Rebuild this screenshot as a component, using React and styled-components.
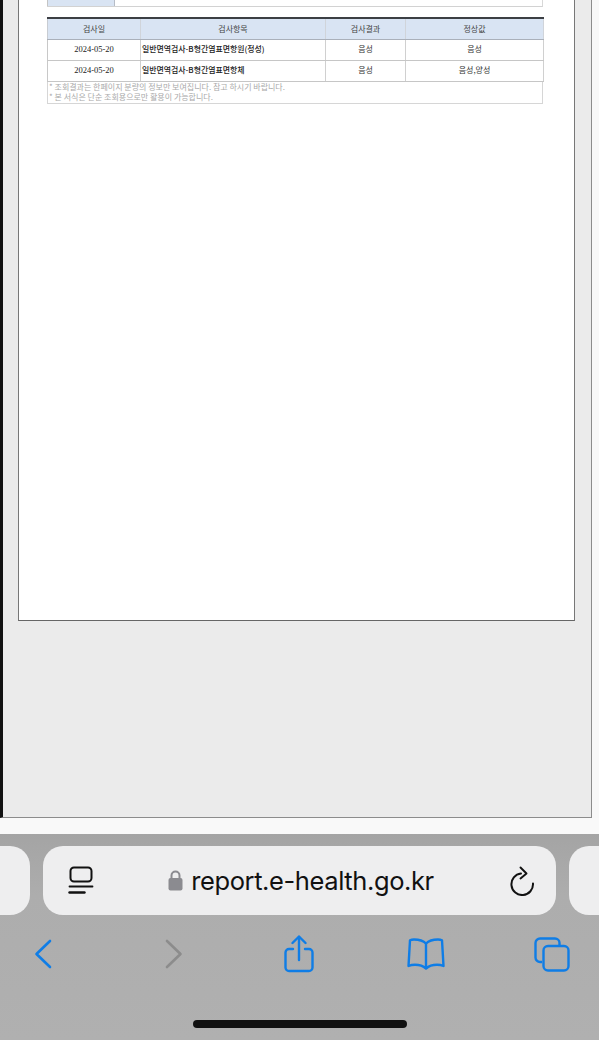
import React from "react";
import styled, { createGlobalStyle } from "styled-components";

const GlobalStyle = createGlobalStyle`
  html, body {
    margin: 0;
    padding: 0;
    background: #f8f8f8;
    overflow: hidden;
  }
`;

const Screen = styled.div`
  width: 599px;
  height: 1040px;
  display: flex;
  flex-direction: column;
  font-family: "Noto Sans CJK KR", "Liberation Sans", sans-serif;
`;

const Viewer = styled.div`
  box-sizing: border-box;
  width: 592px;
  height: 818px;
  flex: none;
  background: #ebebeb;
  border-left: 3px solid #111;
  border-right: 1px solid #8c8c8c;
  border-bottom: 1px solid #8c8c8c;
  padding-left: 15px;
`;

const Sheet = styled.div`
  box-sizing: border-box;
  width: 557px;
  height: 621px;
  background: #fff;
  border-left: 1px solid #777;
  border-right: 1px solid #777;
  border-bottom: 1px solid #666;
  padding-left: 28px;
`;

const PrevBlock = styled.div`
  width: 496px;
  height: 7px;
  border-bottom: 1px solid #d2d2d2;
  border-right: 1px solid #d8d8d8;
  box-sizing: border-box;
`;

const PrevLabel = styled.div`
  width: 68px;
  height: 6px;
  background: #d9e4f3;
  border-left: 1px solid #c4c4c4;
  border-right: 1px solid #b6bcc6;
  box-sizing: border-box;
`;

const ResultTable = styled.table`
  width: 496px;
  margin-top: 10px;
  border-collapse: collapse;
  table-layout: fixed;
  border-top: 2px solid #3c3f44;
  font-size: 8px;
  color: #333;
`;

const Column = styled.col`
  width: ${(p) => p.$w}px;
`;

const HeadCell = styled.th`
  height: 21px;
  padding: 0 0 1px;
  box-sizing: border-box;
  background: #d9e4f3;
  font-weight: 400;
  font-size: 8px;
  color: #444;
  border-bottom: 1px solid #aab0ba;
  border-left: 1px solid ${(p) => (p.$first ? "#c8ccd2" : "#8f98a6")};
  border-right: 1px solid #d0d4da;
`;

const Cell = styled.td`
  height: 21px;
  box-sizing: border-box;
  padding: 0 0 2px ${(p) => (p.$left ? "1px" : "0")};
  text-align: ${(p) => (p.$left ? "left" : "center")};
  border-bottom: 1px solid #c6c6c6;
  border-left: 1px solid ${(p) => (p.$first ? "#c8c8c8" : "#8f98a6")};
  border-right: 1px solid #d0d0d0;
  font-family: ${(p) =>
    p.$date ? '"Liberation Serif", serif' : '"Noto Sans CJK KR", sans-serif'};
  font-size: ${(p) => (p.$date ? "8.5px" : p.$strong ? "7.9px" : "8px")};
  font-weight: ${(p) => (p.$strong ? 500 : 400)};
  color: ${(p) => (p.$strong || p.$date ? "#222" : "#333")};
`;

const Notes = styled.div`
  box-sizing: border-box;
  width: 496px;
  height: 22px;
  padding: 0 0 0 1px;
  border-left: 1px solid #d6d6d6;
  border-right: 1px solid #d6d6d6;
  border-bottom: 1px solid #d6d6d6;
  color: #a9a9a9;
  font-size: 8px;
  line-height: 10.5px;
  white-space: nowrap;
`;

const WhiteStrip = styled.div`
  height: 16px;
  flex: none;
  background: #f9f9f9;
`;

const Chrome = styled.div`
  flex: 1;
  display: flex;
  flex-direction: column;
  background: linear-gradient(#a4a4a4, #adadad 30%, #b0b0b0);
  padding-top: 12px;
`;

const TabRow = styled.div`
  display: flex;
  height: 69px;
  gap: 13px;
  flex: none;
`;

const SidePill = styled.div`
  background: #eeeeef;
  width: ${(p) => p.$w}px;
  flex: none;
  border-radius: ${(p) => (p.$right ? "20px 0 0 20px" : "0 20px 20px 0")};
`;

const AddressBar = styled.div`
  box-sizing: border-box;
  width: 513px;
  flex: none;
  background: #eeeeef;
  border-radius: 20px;
  display: flex;
  align-items: center;
  justify-content: space-between;
  padding: 0 21px 0 25px;
`;

const UrlGroup = styled.div`
  display: flex;
  align-items: center;
  gap: 8px;
  margin-right: 2px;
`;

const UrlText = styled.span`
  font-family: Inter, "Liberation Sans", sans-serif;
  font-size: 25.5px;
  letter-spacing: -0.4px;
  line-height: 36px;
  color: #111;
  white-space: nowrap;
`;

const Toolbar = styled.div`
  display: grid;
  grid-template-columns: 86px 176px 74px 180px 72px;
  justify-items: center;
  align-items: center;
  height: 78px;
  flex: none;
`;

const HomeBar = styled.div`
  width: 214px;
  height: 8px;
  margin: 27px auto 0;
  border-radius: 4px;
  background: #111;
  flex: none;
`;

const ROWS = [
  { date: "2024-05-20", item: "일반면역검사-B형간염표면항원(정성)", result: "음성", normal: "음성" },
  { date: "2024-05-20", item: "일반면역검사-B형간염표면항체", result: "음성", normal: "음성,양성" },
];

const BLUE = "#0f7de6";

function ReaderIcon() {
  return (
    <svg width="26" height="29" viewBox="0 0 26 29" fill="none" stroke="#111" strokeLinecap="round">
      <rect x="2.500" y="1.500" width="21" height="14" rx="3.500" strokeWidth="2" />
      <path d="M1.500 20.500h23" strokeWidth="1.800" />
      <path d="M1.500 26.500h15" strokeWidth="2.400" />
    </svg>
  );
}

function LockIcon() {
  return (
    <svg width="15" height="21" viewBox="0 0 15 21">
      <path d="M3.500 9V5.500a4 4 0 0 1 8 0V9" fill="none" stroke="#8b8b90" strokeWidth="2" />
      <rect x="0.500" y="8" width="14" height="12.500" rx="2" fill="#8b8b90" />
    </svg>
  );
}

function ReloadIcon() {
  return (
    <svg width="25" height="30" viewBox="0 0 25 30" fill="none" stroke="#111" strokeWidth="2" strokeLinecap="round" strokeLinejoin="round">
      <path d="M11 7.500A10.800 10.800 0 1 0 23 17.500" />
      <path d="M10.500 1.500l6 6-6 5" strokeWidth="1.900" />
    </svg>
  );
}

function BackIcon() {
  return (
    <svg width="18" height="30" viewBox="0 0 18 30" fill="none" stroke={BLUE} strokeWidth="2.600" strokeLinecap="round" strokeLinejoin="round">
      <path d="M16 2L2.500 15 16 28" />
    </svg>
  );
}

function ForwardIcon() {
  return (
    <svg width="18" height="30" viewBox="0 0 18 30" fill="none" stroke="#8c8c8c" strokeWidth="2.600" strokeLinecap="round" strokeLinejoin="round">
      <path d="M2 2l13.500 13L2 28" />
    </svg>
  );
}

function ShareIcon() {
  return (
    <svg width="30" height="38" viewBox="0 0 30 38" fill="none" stroke={BLUE} strokeWidth="2.400" strokeLinecap="round" strokeLinejoin="round">
      <path d="M9 14H5a3.500 3.500 0 0 0-3.500 3.500V32.500A3.500 3.500 0 0 0 5 36h20a3.500 3.500 0 0 0 3.500-3.500V17.500A3.500 3.500 0 0 0 25 14h-4" />
      <path d="M15 25V2" />
      <path d="M8.500 8L15 1.500 21.500 8" />
    </svg>
  );
}

function BookIcon() {
  return (
    <svg width="38" height="32" viewBox="0 0 38 32" fill="none" stroke={BLUE} strokeWidth="2.400" strokeLinecap="round" strokeLinejoin="round">
      <path d="M19 5.500C16 2.500 12 1.500 7 1.500c-1.500 0-3 .3-4 .8L1.500 28c2-.8 4-1.200 6.500-1.200 4.500 0 8 1 11 3.700 3-2.700 6.500-3.700 11-3.700 2.500 0 4.500.4 6.500 1.200L35 2.300c-1-.5-2.500-.8-4-.8-5 0-9 1-12 4z" />
      <path d="M19 5.500v24" />
    </svg>
  );
}

function TabsIcon() {
  return (
    <svg width="36" height="35" viewBox="0 0 36 35" fill="none" stroke={BLUE} strokeWidth="2.400" strokeLinejoin="round">
      <path d="M8 25H6a4.500 4.500 0 0 1-4.500-4.500V6A4.500 4.500 0 0 1 6 1.500h15A4.500 4.500 0 0 1 25.500 6v2" />
      <rect x="9.500" y="9" width="25" height="24.500" rx="4.500" />
    </svg>
  );
}

export default function App() {
  return (
    <Screen>
      <GlobalStyle />
      <Viewer>
        <Sheet>
          <PrevBlock>
            <PrevLabel />
          </PrevBlock>
          <ResultTable>
            <colgroup>
              <Column $w={93} />
              <Column $w={185} />
              <Column $w={80} />
              <Column $w={138} />
            </colgroup>
            <thead>
              <tr>
                <HeadCell $first>검사일</HeadCell>
                <HeadCell>검사항목</HeadCell>
                <HeadCell>검사결과</HeadCell>
                <HeadCell>정상값</HeadCell>
              </tr>
            </thead>
            <tbody>
              {ROWS.map((row) => (
                <tr key={row.item}>
                  <Cell $first $date>{row.date}</Cell>
                  <Cell $left $strong>{row.item}</Cell>
                  <Cell>{row.result}</Cell>
                  <Cell>{row.normal}</Cell>
                </tr>
              ))}
            </tbody>
          </ResultTable>
          <Notes>
            <div>* 조회결과는 한페이지 분량의 정보만 보여집니다. 참고 하시기 바랍니다.</div>
            <div>* 본 서식은 단순 조회용으로만 활용이 가능합니다.</div>
          </Notes>
        </Sheet>
      </Viewer>
      <WhiteStrip />
      <Chrome>
        <TabRow>
          <SidePill $w={30} />
          <AddressBar>
            <ReaderIcon />
            <UrlGroup>
              <LockIcon />
              <UrlText>report.e-health.go.kr</UrlText>
            </UrlGroup>
            <ReloadIcon />
          </AddressBar>
          <SidePill $w={31} $right />
        </TabRow>
        <Toolbar>
          <BackIcon />
          <ForwardIcon />
          <ShareIcon />
          <BookIcon />
          <TabsIcon />
        </Toolbar>
        <HomeBar />
      </Chrome>
    </Screen>
  );
}
